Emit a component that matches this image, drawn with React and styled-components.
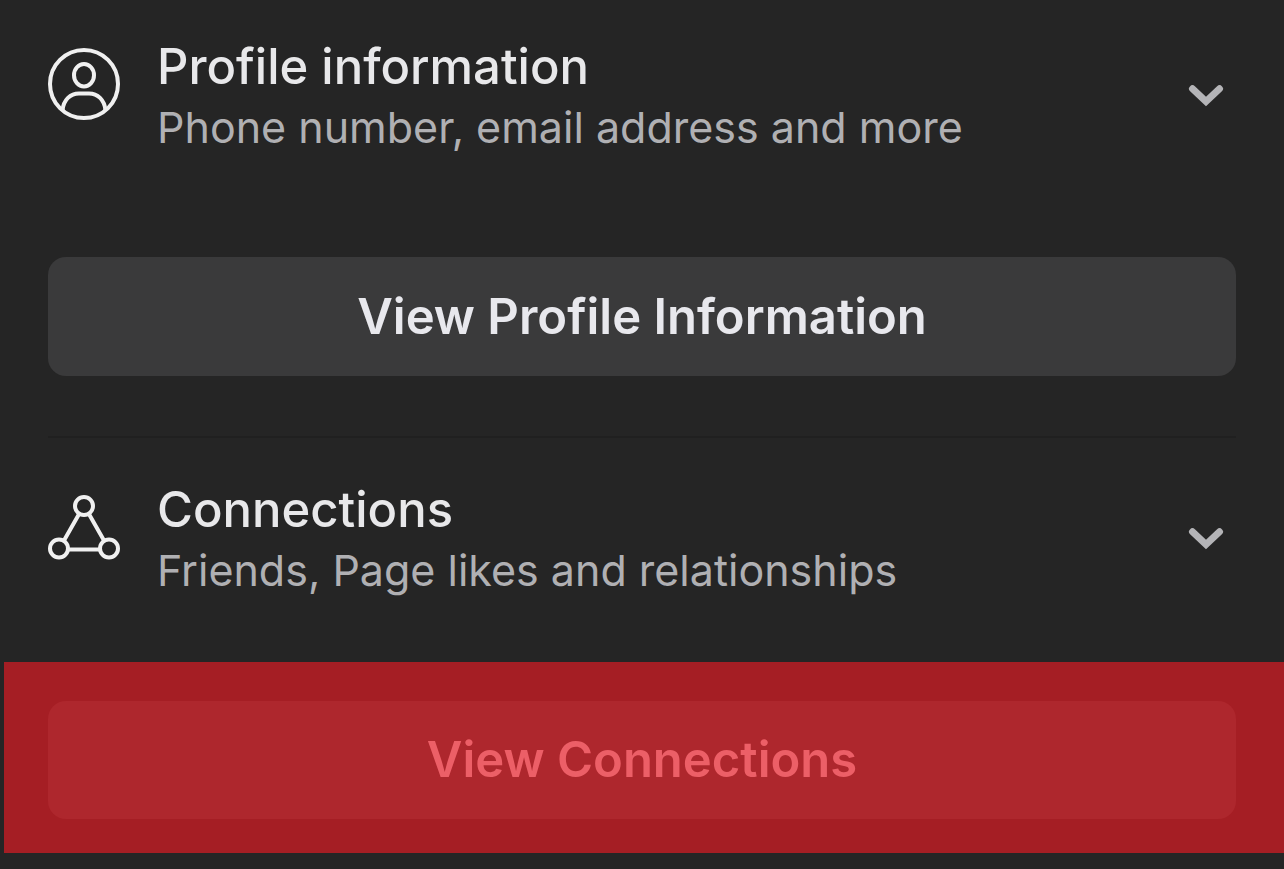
import React from "react";
import styled, { createGlobalStyle } from "styled-components";

const GlobalStyle = createGlobalStyle`
  *, *::before, *::after { box-sizing: border-box; }
  body {
    margin: 0;
    background: #252525;
    color: #e8e8ea;
    font-family: Inter, Roboto, "Liberation Sans", sans-serif;
  }
`;

const Page = styled.main`
  min-height: 100vh;
  padding-top: 37px;
`;

const Header = styled.header`
  display: flex;
  align-items: center;
  padding: 0 48px;
`;

const IconSlot = styled.svg`
  flex: none;
  align-self: flex-start;
  width: 72px;
  height: 72px;
  margin: 11px 37px 0 0;
  fill: none;
  stroke: #f0f0f0;
  stroke-width: 4px;
`;

const Texts = styled.div`
  flex: 1;
  min-width: 0;
`;

const Title = styled.h2`
  margin: 0;
  font-size: 49px;
  line-height: 60px;
  font-weight: 500;
`;

const Subtitle = styled.p`
  margin: 0;
  font-size: 43px;
  line-height: 60px;
  color: #b0b0b3;
`;

const Toggle = styled.button`
  flex: none;
  display: flex;
  align-items: center;
  justify-content: center;
  width: 60px;
  height: 60px;
  padding: 0;
  border: 0;
  background: none;
  cursor: pointer;
`;

const Chevron = styled.svg`
  width: 36px;
  height: 24px;
  fill: none;
  stroke: #b4b4b7;
  stroke-width: 7px;
  stroke-linecap: round;
`;

const Action = styled.div`
  padding: 100px 48px 60px;
`;

const Highlight = styled.div`
  margin: 62px 0 0 4px;
  padding: 39px 48px 34px 44px;
  background: #a51e24;
`;

const ActionButton = styled.button`
  display: block;
  width: 100%;
  height: ${(p) => (p.$danger ? 118 : 119)}px;
  padding: 0;
  border: 0;
  border-radius: 18px;
  background: ${(p) => (p.$danger ? "#ae272d" : "#3a3a3b")};
  color: ${(p) => (p.$danger ? "#ec5f67" : "#e8e8ed")};
  font: inherit;
  font-size: 49px;
  line-height: 60px;
  font-weight: 600;
  cursor: pointer;
`;

const Divider = styled.hr`
  height: 2px;
  margin: 0 48px 42px;
  border: 0;
  background: #202020;
`;

function ProfileIcon() {
  return (
    <IconSlot viewBox="0 0 72 72" aria-hidden="true">
      <circle cx="36" cy="36" r="34" />
      <ellipse cx="36" cy="27.2" rx="10" ry="11.2" />
      <path d="M14.5 62.5 C15.5 51.5 22.5 45.5 31 45.5 H41 C49.500 45.5 56.500 51.5 57.5 62.5" />
    </IconSlot>
  );
}

function ConnectionsIcon() {
  return (
    <IconSlot viewBox="0 0 72 72" aria-hidden="true">
      <circle cx="36" cy="15" r="9" />
      <circle cx="11" cy="57.5" r="9" />
      <circle cx="61" cy="57.5" r="9" />
      <path d="M31.2 22.800 L16 49.500 M40.800 22.800 L56 49.500 M20 58.500 H52" />
    </IconSlot>
  );
}

function SectionHeader({ icon, title, subtitle }) {
  return (
    <Header>
      {icon}
      <Texts>
        <Title>{title}</Title>
        <Subtitle>{subtitle}</Subtitle>
      </Texts>
      <Toggle type="button" aria-label={title} aria-expanded="true">
        <Chevron viewBox="0 0 36 24" aria-hidden="true">
          <path d="M4.500 3.800 L18 16.500 L31.500 3.800" />
        </Chevron>
      </Toggle>
    </Header>
  );
}

export default function App() {
  return (
    <>
      <GlobalStyle />
      <Page>
        <section>
          <SectionHeader
            icon={<ProfileIcon />}
            title="Profile information"
            subtitle="Phone number, email address and more"
          />
          <Action>
            <ActionButton type="button">View Profile Information</ActionButton>
          </Action>
        </section>
        <Divider />
        <section>
          <SectionHeader
            icon={<ConnectionsIcon />}
            title="Connections"
            subtitle="Friends, Page likes and relationships"
          />
          <Highlight>
            <ActionButton type="button" $danger>
              View Connections
            </ActionButton>
          </Highlight>
        </section>
      </Page>
    </>
  );
}
